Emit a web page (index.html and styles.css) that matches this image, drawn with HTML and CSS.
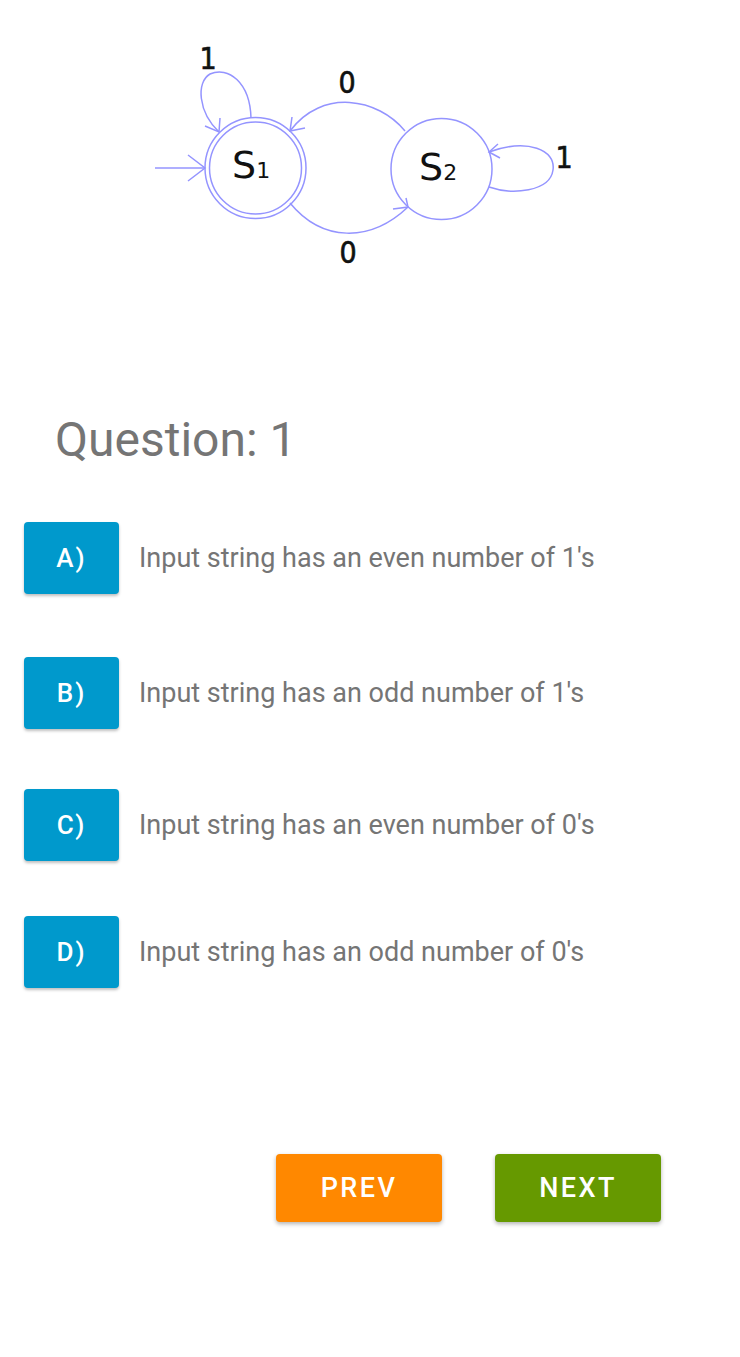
FILE: index.html
```html
<!DOCTYPE html>
<html>
<head>
<meta charset="utf-8">
<link rel="stylesheet" href="styles.css">
</head>
<body>
<div class="page">
  <div class="diagram">
    <svg width="740" height="300" viewBox="0 0 740 300">
      <g fill="none" stroke="#9494ff" stroke-width="1.5">
        <circle cx="255.5" cy="168" r="50.5"/>
        <circle cx="255.5" cy="168" r="46"/>
        <circle cx="441.5" cy="169" r="50.5"/>
        <line x1="155" y1="168" x2="205" y2="168"/>
        <polyline points="188,155 205,168 188,181"/>
        <path d="M251 118 C250 82 228 66 210 74 C196 82 198 112 219 132"/>
        <polyline points="205,126 219,132 220,118"/>
        <path d="M405 131 C378 98 322 88 290 131"/>
        <polyline points="292,117 290,131 305,128"/>
        <path d="M290 203 C322 242 370 243 408 207"/>
        <polyline points="393,209 408,207 406,198"/>
        <path d="M489 152 C528 138 556 150 553 170 C550 192 512 195 489 187"/>
        <polyline points="498,144 489,152 500,158"/>
      </g>
      <g class="lbl">
        <text x="208" y="69" text-anchor="middle">1</text>
        <text x="347" y="93" text-anchor="middle">0</text>
        <text x="348" y="263" text-anchor="middle">0</text>
        <text x="564" y="168" text-anchor="middle">1</text>
      </g>
      <text class="st" x="232" y="178">S<tspan class="sub">1</tspan></text>
      <text class="st" x="419" y="180">S<tspan class="sub">2</tspan></text>
    </svg>
  </div>
  <h1 class="question">Question: 1</h1>
  <div class="options">
    <div class="opt opt-a"><div class="key">A)</div><div class="txt">Input string has an even number of 1's</div></div>
    <div class="opt opt-b"><div class="key">B)</div><div class="txt">Input string has an odd number of 1's</div></div>
    <div class="opt opt-c"><div class="key">C)</div><div class="txt">Input string has an even number of 0's</div></div>
    <div class="opt opt-d"><div class="key">D)</div><div class="txt">Input string has an odd number of 0's</div></div>
  </div>
  <div class="nav">
    <div class="btn prev">PREV</div>
    <div class="btn next">NEXT</div>
  </div>
</div>
</body>
</html>
```

FILE: styles.css
```css
html, body {
  margin: 0;
  padding: 0;
  background: #ffffff;
}
.page {
  width: 740px;
  height: 1357px;
  font-family: Roboto, "Liberation Sans", sans-serif;
}
.diagram {
  height: 300px;
}
.diagram svg {
  display: block;
}
.lbl text {
  font-family: "DejaVu Sans Condensed", "DejaVu Sans", sans-serif;
  font-weight: normal;
  font-size: 30px;
  fill: #111;
  stroke: #111;
  stroke-width: 0.6px;
}
.st {
  font-family: "DejaVu Sans", sans-serif;
  font-size: 38px;
  fill: #111;
}
.sub {
  font-size: 22px;
}
.question {
  margin: 112px 0 0 55px;
  font-weight: 400;
  font-size: 48px;
  line-height: 56px;
  color: #757575;
}
.options {
  display: flex;
  flex-direction: column;
  padding-left: 24px;
  margin-top: 54px;
}
.opt {
  display: flex;
  align-items: center;
  gap: 20px;
}
.opt-b { margin-top: 63px; }
.opt-c { margin-top: 60px; }
.opt-d { margin-top: 55px; }
.key {
  width: 95px;
  height: 72px;
  border-radius: 4px;
  background: #0099cc;
  color: #fff;
  font-weight: 500;
  font-size: 26px;
  letter-spacing: 2px;
  display: flex;
  align-items: center;
  justify-content: center;
  box-shadow: 0 2px 3px rgba(0,0,0,0.25);
}
.txt {
  font-size: 27px;
  color: #757575;
}
.nav {
  display: flex;
  gap: 53px;
  margin: 166px 0 0 276px;
}
.btn {
  width: 166px;
  height: 68px;
  border-radius: 4px;
  color: #fff;
  font-weight: 500;
  font-size: 27px;
  letter-spacing: 2.4px;
  display: flex;
  align-items: center;
  justify-content: center;
  box-shadow: 0 2px 4px rgba(0,0,0,0.3);
}
.prev { background: #ff8800; }
.next { background: #669900; }
```
